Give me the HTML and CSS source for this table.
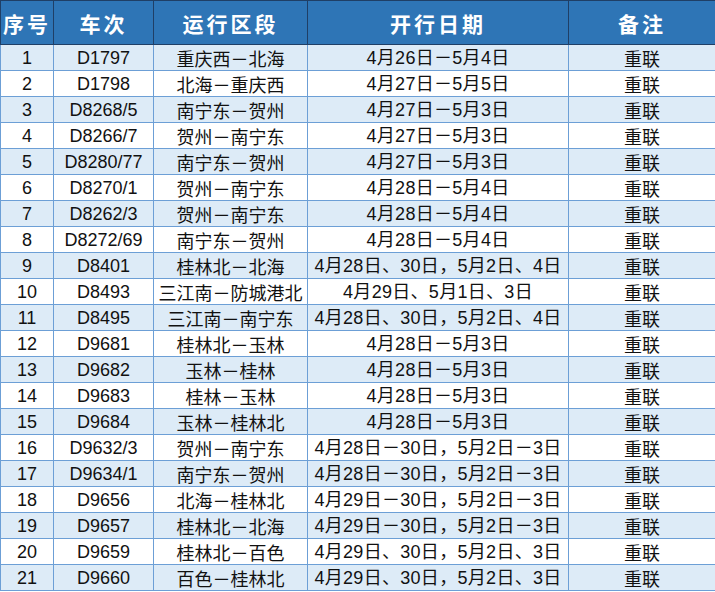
FILE: index.html
```html
<!DOCTYPE html>
<html lang="zh-CN">
<head>
<meta charset="utf-8">
<title>重联列车表</title>
<link rel="stylesheet" href="styles.css">
</head>
<body>
<table class="sched">
  <colgroup>
    <col class="c-no"><col class="c-train"><col class="c-route"><col class="c-date"><col class="c-note">
  </colgroup>
  <thead>
    <tr><th>序号</th><th>车次</th><th>运行区段</th><th>开行日期</th><th>备注</th></tr>
  </thead>
  <tbody>
    <tr><td>1</td><td>D1797</td><td class="cn">重庆西－北海</td><td class="dt">4月26日－5月4日</td><td class="cn">重联</td></tr>
    <tr><td>2</td><td>D1798</td><td class="cn">北海－重庆西</td><td class="dt">4月27日－5月5日</td><td class="cn">重联</td></tr>
    <tr><td>3</td><td>D8268/5</td><td class="cn">南宁东－贺州</td><td class="dt">4月27日－5月3日</td><td class="cn">重联</td></tr>
    <tr><td>4</td><td>D8266/7</td><td class="cn">贺州－南宁东</td><td class="dt">4月27日－5月3日</td><td class="cn">重联</td></tr>
    <tr><td>5</td><td>D8280/77</td><td class="cn">南宁东－贺州</td><td class="dt">4月27日－5月3日</td><td class="cn">重联</td></tr>
    <tr><td>6</td><td>D8270/1</td><td class="cn">贺州－南宁东</td><td class="dt">4月28日－5月4日</td><td class="cn">重联</td></tr>
    <tr><td>7</td><td>D8262/3</td><td class="cn">贺州－南宁东</td><td class="dt">4月28日－5月4日</td><td class="cn">重联</td></tr>
    <tr><td>8</td><td>D8272/69</td><td class="cn">南宁东－贺州</td><td class="dt">4月28日－5月4日</td><td class="cn">重联</td></tr>
    <tr><td>9</td><td>D8401</td><td class="cn">桂林北－北海</td><td class="dt">4月28日、30日，5月2日、4日</td><td class="cn">重联</td></tr>
    <tr><td>10</td><td>D8493</td><td class="cn">三江南－防城港北</td><td class="dt">4月29日、5月1日、3日</td><td class="cn">重联</td></tr>
    <tr><td>11</td><td>D8495</td><td class="cn">三江南－南宁东</td><td class="dt">4月28日、30日，5月2日、4日</td><td class="cn">重联</td></tr>
    <tr><td>12</td><td>D9681</td><td class="cn">桂林北－玉林</td><td class="dt">4月28日－5月3日</td><td class="cn">重联</td></tr>
    <tr><td>13</td><td>D9682</td><td class="cn">玉林－桂林</td><td class="dt">4月28日－5月3日</td><td class="cn">重联</td></tr>
    <tr><td>14</td><td>D9683</td><td class="cn">桂林－玉林</td><td class="dt">4月28日－5月3日</td><td class="cn">重联</td></tr>
    <tr><td>15</td><td>D9684</td><td class="cn">玉林－桂林北</td><td class="dt">4月28日－5月3日</td><td class="cn">重联</td></tr>
    <tr><td>16</td><td>D9632/3</td><td class="cn">贺州－南宁东</td><td class="dt">4月28日－30日，5月2日－3日</td><td class="cn">重联</td></tr>
    <tr><td>17</td><td>D9634/1</td><td class="cn">南宁东－贺州</td><td class="dt">4月28日－30日，5月2日－3日</td><td class="cn">重联</td></tr>
    <tr><td>18</td><td>D9656</td><td class="cn">北海－桂林北</td><td class="dt">4月29日－30日，5月2日－3日</td><td class="cn">重联</td></tr>
    <tr><td>19</td><td>D9657</td><td class="cn">桂林北－北海</td><td class="dt">4月29日－30日，5月2日－3日</td><td class="cn">重联</td></tr>
    <tr><td>20</td><td>D9659</td><td class="cn">桂林北－百色</td><td class="dt">4月29日、30日，5月2日、3日</td><td class="cn">重联</td></tr>
    <tr><td>21</td><td>D9660</td><td class="cn">百色－桂林北</td><td class="dt">4月29日、30日，5月2日、3日</td><td class="cn">重联</td></tr>
  </tbody>
</table>
</body>
</html>
```

FILE: styles.css
```css
html, body {
  margin: 0;
  padding: 0;
  background: #ffffff;
}

.sched {
  border-collapse: collapse;
  table-layout: fixed;
  width: 715px;
  font-family: "Liberation Sans", "Noto Sans CJK SC", sans-serif;
  color: #111111;
}

.c-no { width: 53px; }
.c-train { width: 100px; }
.c-route { width: 154px; }
.c-date { width: 261px; }
.c-note { width: 147px; }

.sched th {
  background: #2e75b6;
  color: #ffffff;
  font-family: "Noto Sans CJK SC", sans-serif;
  font-weight: 700;
  font-size: 21px;
  letter-spacing: 3px;
  height: 43px;
  padding: 0;
  border: 1px solid #1f3f66;
  text-align: center;
  vertical-align: middle;
}

.sched td {
  height: 25px;
  padding: 0;
  border: 1px solid #6c9fd6;
  font-size: 18px;
  line-height: 24px;
  text-align: center;
  vertical-align: middle;
  white-space: nowrap;
  overflow: hidden;
}

.sched tbody tr:nth-child(odd) td {
  background: #ddebf7;
}

.sched td.cn {
  font-family: "Noto Sans CJK SC", sans-serif;
  font-size: 18px;
}

.sched td.dt {
  letter-spacing: 0.3px;
}
```
